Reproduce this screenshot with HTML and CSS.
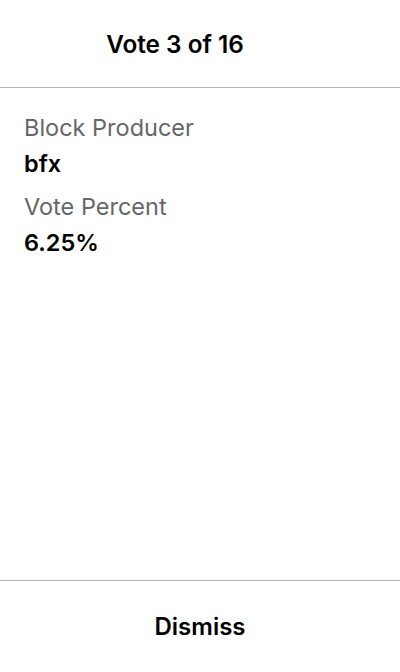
FILE: index.html
```html
<!DOCTYPE html>
<html>
<head>
<meta charset="utf-8">
<link rel="stylesheet" href="styles.css">
</head>
<body>
<div class="screen">
  <header class="header">
    <div class="title">Vote 3 of 16</div>
    <div class="spacer"></div>
  </header>
  <main class="content">
    <div class="label">Block Producer</div>
    <div class="value">bfx</div>
    <div class="label">Vote Percent</div>
    <div class="value">6.25%</div>
  </main>
  <footer class="footer">
    <div class="dismiss">Dismiss</div>
  </footer>
</div>
</body>
</html>
```
FILE: styles.css
```css
html, body {
  margin: 0;
  padding: 0;
  background: #fff;
}
body {
  font-family: Inter, "Noto Sans", sans-serif;
  color: #000;
}
.screen {
  height: 672px;
  display: flex;
  flex-direction: column;
}
.header {
  height: 87px;
  border-bottom: 1px solid #b3b3b3;
  display: flex;
  align-items: center;
}
.title {
  flex: 1;
  text-align: center;
  font-size: 24.3px;
  font-weight: 600;
}
.spacer {
  width: 50px;
}
.content {
  flex: 1;
  padding: 26px 24px 0;
}
.label {
  font-size: 23.5px;
  color: #666;
  line-height: 28px;
  margin-top: 15px;
}
.label:first-child {
  margin-top: 0;
}
.value {
  font-size: 23.5px;
  font-weight: 600;
  line-height: 28px;
  margin-top: 8px;
}
.footer {
  height: 91px;
  border-top: 1px solid #b3b3b3;
  display: flex;
  align-items: center;
  justify-content: center;
}
.dismiss {
  font-size: 24px;
  font-weight: 600;
}
```
